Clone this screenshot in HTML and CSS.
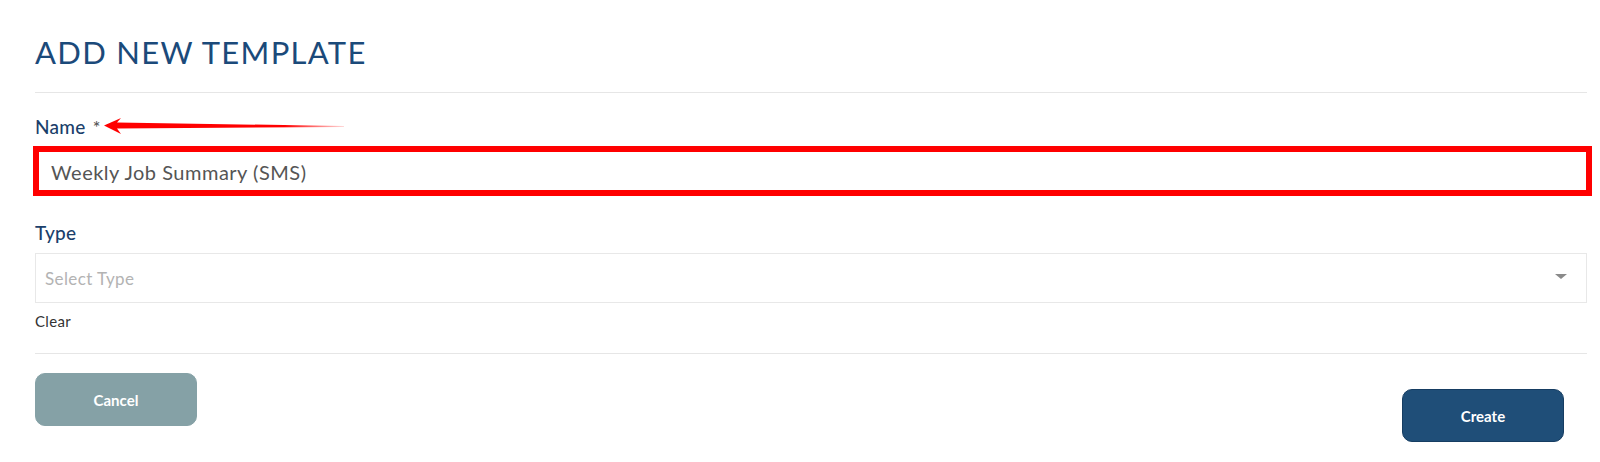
FILE: index.html
```html
<!DOCTYPE html>
<html lang="en">
<head>
<meta charset="utf-8">
<title>Add New Template</title>
<link rel="stylesheet" href="styles.css">
</head>
<body>
<div class="page">
  <h1 class="title">ADD NEW TEMPLATE</h1>
  <hr class="rule">
  <div class="field">
    <label class="label">Name <span class="req">*</span></label>
    <div class="input-wrap">
      <div class="input">Weekly Job Summary (SMS)</div>
      <div class="highlight"></div>
    </div>
  </div>
  <div class="field field-type">
    <label class="label">Type</label>
    <div class="select">
      <span class="placeholder">Select Type</span>
      <span class="caret"></span>
    </div>
    <div class="clear">Clear</div>
  </div>
  <hr class="rule rule-bottom">
  <div class="actions">
    <button class="btn btn-cancel">Cancel</button>
    <button class="btn btn-create">Create</button>
  </div>
  <svg class="arrow" width="245" height="20" viewBox="0 0 245 20">
    <defs>
      <linearGradient id="fade" x1="0" y1="0" x2="1" y2="0">
        <stop offset="0" stop-color="#ff0000" stop-opacity="1"/>
        <stop offset="0.75" stop-color="#ff0000" stop-opacity="1"/>
        <stop offset="1" stop-color="#ff0000" stop-opacity="0.15"/>
      </linearGradient>
    </defs>
    <path d="M2 9.5 L19 2 L15 6.5 L242 10 L242 11 L15 12.5 L19 18 Z" fill="url(#fade)"/>
  </svg>
</div>
</body>
</html>
```
FILE: styles.css
```css
html, body {
  margin: 0;
  padding: 0;
  background: #ffffff;
}
body {
  font-family: Lato, "Noto Sans", "Liberation Sans", sans-serif;
}
.page {
  position: relative;
  padding: 33px 13px 0 35px;
}
.title {
  margin: 0;
  font-size: 31px;
  line-height: 38px;
  font-weight: 400;
  color: #1b4a7a;
  letter-spacing: 1.3px;
}
.rule {
  border: 0;
  border-top: 1px solid #e6e6e6;
  margin: 21px 0 0 0;
}
.field {
  margin-top: 22px;
}
.label {
  display: block;
  font-size: 19px;
  line-height: 24px;
  color: #1b3f6b;
  font-weight: 500;
  letter-spacing: 0.3px;
}
.req {
  color: #555;
  font-size: 18px;
  margin-left: 2px;
}
.input-wrap {
  position: relative;
  margin-top: 9px;
}
.input {
  height: 46px;
  border: 1px solid #e6e6e6;
  padding: 0 15px;
  display: flex;
  align-items: center;
  font-size: 20px;
  letter-spacing: 0.5px;
  color: #555555;
}
.highlight {
  position: absolute;
  left: -2px;
  right: -5px;
  top: -2px;
  bottom: 0;
  border: 6px solid #ff0000;
  pointer-events: none;
}
.field-type {
  margin-top: 25px;
}
.select {
  margin-top: 8px;
  height: 48px;
  border: 1px solid #e8e8e8;
  display: flex;
  align-items: center;
  justify-content: space-between;
  padding: 0 19px 0 9px;
}
.placeholder {
  font-size: 17px;
  letter-spacing: 0.4px;
  color: #b3b3b3;
}
.caret {
  width: 0;
  height: 0;
  border-left: 6px solid transparent;
  border-right: 6px solid transparent;
  border-top: 5px solid #8a8a8a;
  margin-top: -4px;
}
.clear {
  margin-top: 9px;
  font-size: 15px;
  letter-spacing: 0.3px;
  color: #333333;
}
.rule-bottom {
  margin-top: 23px;
}
.actions {
  display: flex;
  justify-content: space-between;
  align-items: flex-start;
  padding-top: 19px;
  padding-bottom: 20px;
}
.btn {
  width: 162px;
  height: 53px;
  border-radius: 10px;
  font-family: Lato, "Noto Sans", sans-serif;
  font-size: 15px;
  font-weight: 700;
  color: #ffffff;
  cursor: pointer;
}
.btn-cancel {
  background: #85a1a6;
  border: 1px solid #85a1a6;
}
.btn-create {
  background: #1f4e78;
  border: 1px solid #163d62;
  margin-top: 16px;
  margin-right: 23px;
}
.arrow {
  position: absolute;
  left: 102px;
  top: 116px;
}
```
